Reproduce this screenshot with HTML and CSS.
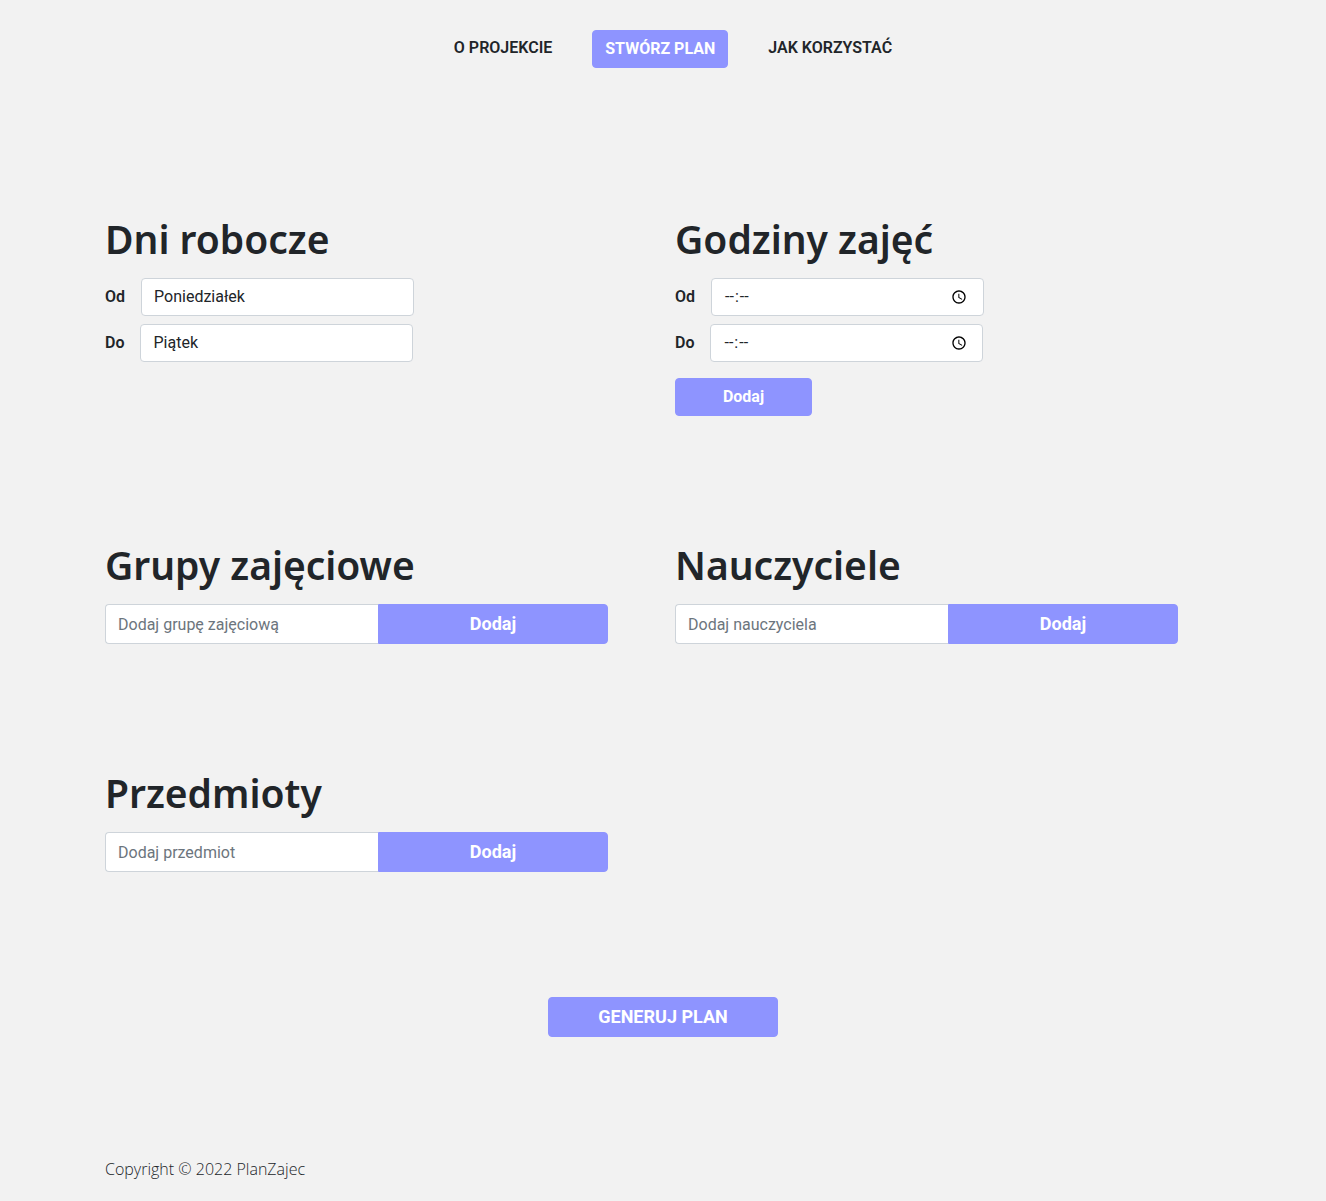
FILE: index.html
```html
<!DOCTYPE html>
<html lang="pl">
<head>
  <meta charset="utf-8">
  <meta name="viewport" content="width=device-width, initial-scale=1">
  <title>PlanZajec</title>
  <link rel="stylesheet" href="styles.css">
</head>
<body>
  <nav class="nav">
    <a class="nav-link" href="#o-projekcie">O PROJEKCIE</a>
    <a class="btn nav-btn" href="#plan">STWÓRZ PLAN</a>
    <a class="nav-link" href="#jak-korzystac">JAK KORZYSTAĆ</a>
  </nav>

  <main class="container" id="plan">
    <div class="grid">
      <section>
        <h1>Dni robocze</h1>
        <div class="field">
          <label for="day-from">Od</label>
          <select class="control" id="day-from">
            <option>Poniedziałek</option>
            <option>Wtorek</option>
          </select>
        </div>
        <div class="field">
          <label for="day-to">Do</label>
          <select class="control" id="day-to">
            <option>Piątek</option>
            <option>Sobota</option>
          </select>
        </div>
      </section>

      <section>
        <h1>Godziny zajęć</h1>
        <div class="field">
          <label for="time-from">Od</label>
          <input class="control" id="time-from" type="time">
        </div>
        <div class="field">
          <label for="time-to">Do</label>
          <input class="control" id="time-to" type="time">
        </div>
        <button class="btn btn-hours" type="button">Dodaj</button>
      </section>

      <section>
        <h1>Grupy zajęciowe</h1>
        <div class="group">
          <input class="control" type="text" aria-label="Grupa zajęciowa" placeholder="Dodaj grupę zajęciową">
          <button class="btn btn-wide" type="button">Dodaj</button>
        </div>
      </section>

      <section>
        <h1>Nauczyciele</h1>
        <div class="group">
          <input class="control" type="text" aria-label="Nauczyciel" placeholder="Dodaj nauczyciela">
          <button class="btn btn-wide" type="button">Dodaj</button>
        </div>
      </section>

      <section>
        <h1>Przedmioty</h1>
        <div class="group">
          <input class="control" type="text" aria-label="Przedmiot" placeholder="Dodaj przedmiot">
          <button class="btn btn-wide" type="button">Dodaj</button>
        </div>
      </section>
    </div>

    <div class="submit">
      <button class="btn btn-wide" type="button">GENERUJ PLAN</button>
    </div>
  </main>

  <footer class="container footer">Copyright © 2022 PlanZajec</footer>
</body>
</html>
```
FILE: styles.css
```css
*,
*::before,
*::after {
  box-sizing: border-box;
}

body {
  margin: 0;
  background: #f2f2f2;
  color: #212529;
  font-family: Roboto, "Liberation Sans", sans-serif;
  font-size: 16px;
  line-height: 24px;
}

.nav {
  display: flex;
  flex-wrap: wrap;
  justify-content: center;
  align-items: center;
  gap: 12px 40px;
  padding: 30px 0 0 20px;
}

.nav-link {
  padding-bottom: 2px;
  color: #212529;
  font-weight: 600;
  text-decoration: none;
}

.container {
  max-width: 1140px;
  margin: 0 auto;
  padding: 0 12px;
}

.grid {
  display: grid;
  grid-template-columns: repeat(2, 1fr);
  gap: 125px 24px;
  padding-top: 147px;
}

h1 {
  margin: 0 0 15px;
  font-family: "Noto Sans", "Open Sans", sans-serif;
  font-size: 39px;
  font-weight: 600;
  line-height: 48px;
}

.field {
  display: flex;
  align-items: center;
  gap: 16px;
  margin-bottom: 8px;
}

.field label {
  font-weight: 600;
}

.control {
  width: 50%;
  height: 38px;
  padding: 6px 12px;
  border: 1px solid #ced4da;
  border-radius: 4px;
  background: #fff;
  color: #212529;
  font: inherit;
  appearance: none;
}

.control::placeholder {
  color: #6c757d;
  opacity: 1;
}

/* 24-hour clock */
.control::-webkit-datetime-edit-ampm-field {
  display: none;
}

.btn {
  height: 38px;
  padding: 6px 12px;
  border: 1px solid #8e94ff;
  border-radius: 4px;
  background: #8e94ff;
  color: #fff;
  font: inherit;
  font-weight: 700;
  text-align: center;
  text-decoration: none;
  cursor: pointer;
}

.btn-hours {
  width: 137px;
  margin-top: 8px;
}

.btn-wide {
  width: 230px;
  height: 40px;
  font-size: 18px;
}

.group {
  display: flex;
}

.group .control {
  height: 40px;
  border-right: 0;
  border-radius: 4px 0 0 4px;
}

.group .btn {
  border-radius: 0 4px 4px 0;
}

.submit {
  display: flex;
  justify-content: center;
  padding-top: 125px;
}

.footer {
  padding-top: 120px;
  padding-bottom: 20px;
  font-family: "Open Sans", "Noto Sans", sans-serif;
  font-weight: 300;
}

@media (max-width: 900px) {
  .grid {
    grid-template-columns: 1fr;
    gap: 60px;
    padding-top: 60px;
  }
}
```
